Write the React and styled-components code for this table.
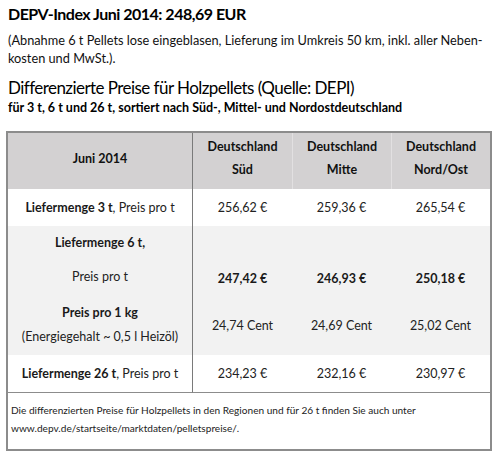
import React from 'react';
import styled, { createGlobalStyle } from 'styled-components';

const GlobalStyle = createGlobalStyle`
  body {
    margin: 0;
    background: #ffffff;
    font-family: Lato, "Open Sans", sans-serif;
    color: #000;
  }
`

const Page = styled.div`
  width: 500px;
  height: 460px;
  padding: 3px 0 0 8px;
  box-sizing: border-box;
  overflow: hidden;
`

const Title = styled.h1`
  margin: 0;
  font-size: 16px;
  letter-spacing: -0.5px;
  line-height: 22px;
  font-weight: 700;
  white-space: nowrap;
`

const Intro = styled.p`
  margin: 6px 0 0 0;
  font-size: 12.75px;
  line-height: 18px;
  color: #111;
  white-space: nowrap;
`

const Heading = styled.h2`
  margin: 10px 0 0 0;
  font-size: 17px;
  letter-spacing: -0.55px;
  line-height: 22px;
  font-weight: 400;
  color: #000;
  white-space: nowrap;
`

const Sub = styled.div`
  font-size: 12.5px;
  line-height: 18px;
  font-weight: 700;
  white-space: nowrap;
`

const Table = styled.div`
  margin: 14px 0 0 -2px;
  width: 486px;
  border: 2px solid #8c8c8c;
  box-sizing: border-box;
  display: grid;
  grid-template-columns: 185px repeat(3, 1fr);
  font-size: 12.5px;
  color: #222;
`

const Cell = styled.div`
  display: flex;
  flex-direction: column;
  align-items: center;
  justify-content: ${p => p.$align || 'center'};
  text-align: center;
  background: ${p => p.$bg || '#ffffff'};
  height: ${p => p.$h}px;
  box-sizing: border-box;
  padding: ${p => p.$pad || '0'};
  line-height: ${p => p.$lh || 18}px;
  font-weight: ${p => (p.$bold ? 700 : 400)};
  border-right: ${p => (p.$first ? '1px solid #7a7a7a' : 'none')};
  border-bottom: ${p => (p.$last ? '1px solid #8c8c8c' : 'none')};
  white-space: nowrap;
`

const HeadCell = styled(Cell)`
  background: #d3d1d2;
  color: #111;
  font-weight: 700;
  line-height: 23px;
  padding-bottom: 6px;
  border-left: ${p => (p.$sep ? '1px solid #e2e0e1' : 'none')};
`

const B = styled.b`
  font-weight: 700;
  color: #1a1a1a;
`

const Footer = styled.div`
  grid-column: 1 / -1;
  height: 56px;
  box-sizing: border-box;
  padding: 8px 0 0 3px;
  font-size: 10.1px;
  line-height: 18px;
  color: #222;
  white-space: nowrap;
`

const regions = [
  ['Deutschland', 'Süd'],
  ['Deutschland', 'Mitte'],
  ['Deutschland', 'Nord/Ost'],
]

const rows = [
  { h: 37, values: ['256,62 €', '259,36 €', '265,54 €'] },
  { h: 70, bg: '#f2f2f2', bold: true, values: ['247,42 €', '246,93 €', '250,18 €'] },
  { h: 59, bg: '#f2f2f2', values: ['24,74 Cent', '24,69 Cent', '25,02 Cent'] },
  { h: 38, last: true, values: ['234,23 €', '232,16 €', '230,97 €'] },
]

function labelFor(i) {
  if (i === 0) return <span><B>Liefermenge 3 t</B>, Preis pro t</span>
  if (i === 1) return <><B>Liefermenge 6 t,</B><span>Preis pro t</span></>
  if (i === 2) return <><B>Preis pro 1 kg</B><span>(Energiegehalt ~ 0,5 l Heizöl)</span></>
  return <span><B>Liefermenge 26 t</B>, Preis pro t</span>
}

function App() {
  return (
    <>
      <GlobalStyle />
      <Page>
        <Title>DEPV-Index Juni 2014: 248,69 EUR</Title>
        <Intro>
          (Abnahme 6 t Pellets lose eingeblasen, Lieferung im Umkreis 50 km, inkl. aller Neben-<br />
          kosten und MwSt.).
        </Intro>
        <Heading>Differenzierte Preise für Holzpellets (Quelle: DEPI)</Heading>
        <Sub>für 3 t, 6 t und 26 t, sortiert nach Süd-, Mittel- und Nordostdeutschland</Sub>

        <Table>
          <HeadCell $h={56} $first>Juni 2014</HeadCell>
          {regions.map((r, i) => (
            <HeadCell key={r[1]} $h={56} $sep={i > 0}>
              <span>{r[0]}</span>
              <span>{r[1]}</span>
            </HeadCell>
          ))}

          {rows.map((row, i) => {
            const firstProps =
              i === 1 ? { $lh: 34, $align: 'flex-start' }
              : i === 2 ? { $lh: 24, $align: 'flex-start', $pad: '5px 0 0 0' }
              : {}
            const valueProps =
              i === 1 ? { $lh: 34, $align: 'flex-end' } : {}
            return (
              <React.Fragment key={i}>
                <Cell $h={row.h} $bg={row.bg} $first $last={row.last} {...firstProps}>
                  {labelFor(i)}
                </Cell>
                {row.values.map(v => (
                  <Cell key={v} $h={row.h} $bg={row.bg} $bold={row.bold} $last={row.last} {...valueProps}>
                    {row.bold ? <B>{v}</B> : v}
                  </Cell>
                ))}
              </React.Fragment>
            )
          })}

          <Footer>
            Die differenzierten Preise für Holzpellets in den Regionen und für 26 t finden Sie auch unter<br />
            www.depv.de/startseite/marktdaten/pelletspreise/.
          </Footer>
        </Table>
      </Page>
    </>
  )
}

export default App;
